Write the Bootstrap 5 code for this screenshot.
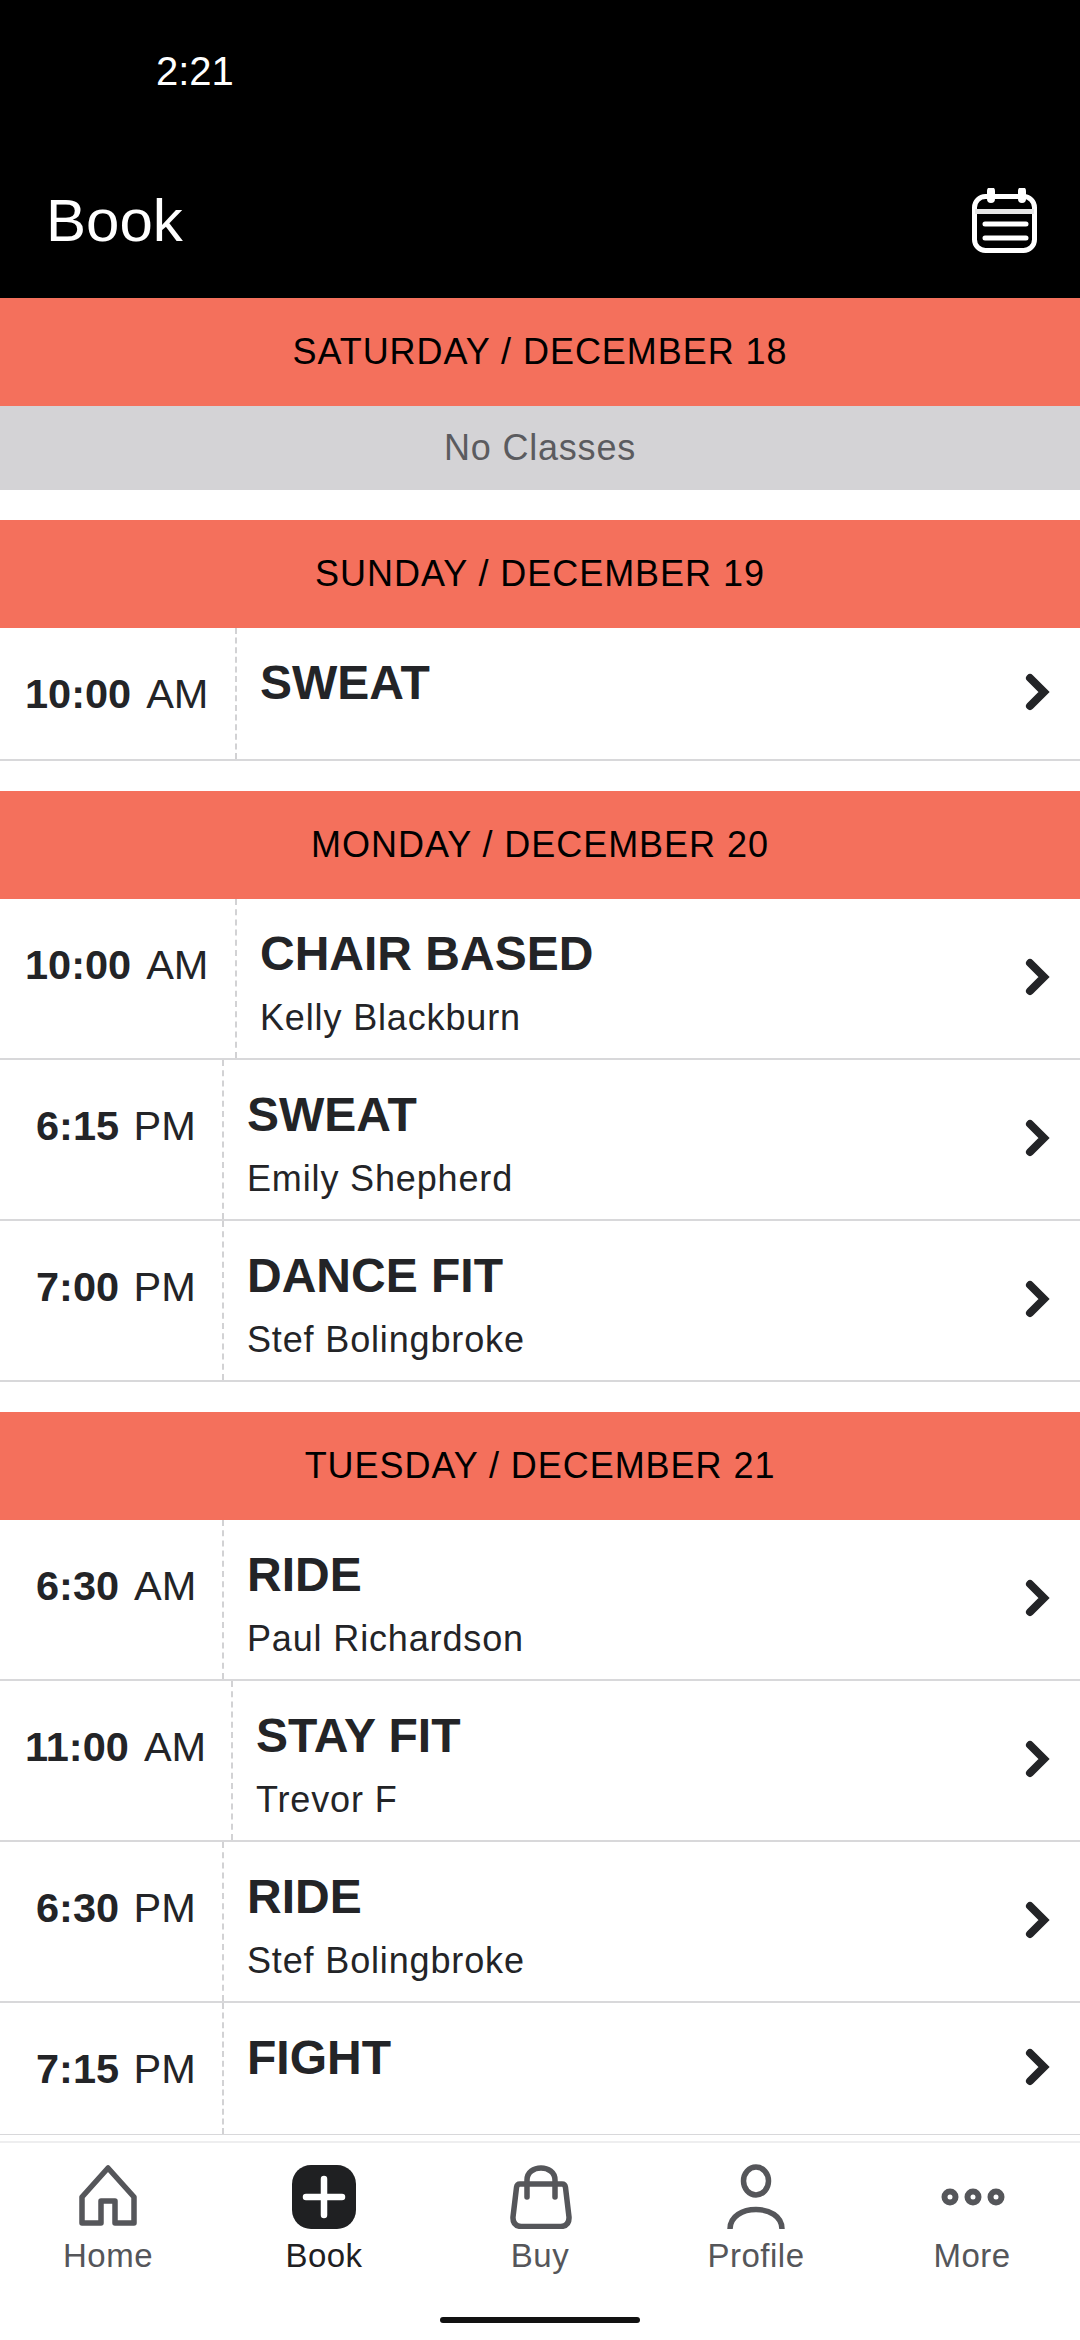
<!DOCTYPE html>
<html lang="en">
<head>
<meta charset="utf-8">
<title>Book</title>
<link href="https://cdn.jsdelivr.net/npm/bootstrap@5.3.0/dist/css/bootstrap.min.css" rel="stylesheet">
<style>
html,body{height:100%;}
body{font-family:"Liberation Sans",Arial,sans-serif;background:#fff;color:#232427;overflow:hidden;}
.app-shell{height:2340px;}
.top-head{background:#000;color:#fff;height:298px;}
.clock{font-size:40px;line-height:46px;padding:48px 0 0 156px;height:188px;}
.head-row{padding:0 42px 0 46px;}
.head-title{font-size:60px;line-height:66px;}
.day-band{background:#f4705c;color:#000;height:108px;font-size:36px;letter-spacing:.95px;}
.no-class{background:#d4d3d6;color:#5b5b5f;height:84px;font-size:36px;letter-spacing:.8px;}
.day-group{margin-bottom:30px;}
.class-row{border-bottom:2px solid #d8d8da;height:161px;}
.class-row.solo{height:133px;}
.time-cell{flex:none;font-size:41.500px;line-height:48px;padding-top:42px;white-space:nowrap;word-spacing:3px;}
.time-cell b{font-weight:700;}
.am-mark{margin-left:.5px;}
.tw-a{width:235px;padding-left:25px;}
.tw-b{width:222px;padding-left:36px;}
.tw-c{width:231px;padding-left:25px;}
.info-cell{border-left:2px dashed #d2d2d4;padding:27px 0 0 23px;}
.class-name{font-size:48px;line-height:56px;font-weight:700;}
.class-who{font-size:36px;line-height:42px;letter-spacing:.85px;margin-top:15px;}
.chev{width:26px;height:38px;margin:0 29px 4px 0;}
.tab-bar{border-top:2px solid #eeeeef;height:199px;margin-top:6px;}
.tab-item{width:216px;padding-top:20px;color:#55565a;font-size:33px;line-height:38px;letter-spacing:.5px;}
.tab-item.on{color:#1f2022;}
.tab-ico{width:70px;height:66px;display:block;margin-bottom:8px;}
.home-bar{position:absolute;left:440px;bottom:17px;width:200px;height:6px;border-radius:3px;background:#111;}
</style>
</head>
<body>
<div class="app-shell d-flex flex-column position-relative">
  <header class="top-head flex-shrink-0">
    <div class="clock">2:21</div>
    <div class="head-row d-flex justify-content-between align-items-center">
      <div class="head-title">Book</div>
      <svg width="66" height="66" viewBox="0 0 66 66" fill="none" stroke="#fff" stroke-linecap="round">
        <rect x="2.5" y="8.500" width="60" height="54" rx="11" stroke-width="5"/>
        <path d="M3 23.500H62" stroke-width="5" stroke="#e6e6e6" stroke-linecap="butt"/>
        <path d="M19 3V11M50 3V11" stroke-width="8"/>
        <path d="M13 36H54M13 50H54" stroke-width="5"/>
      </svg>
    </div>
  </header>
  <main class="flex-grow-1 overflow-hidden">
    <section class="day-group">
      <div class="day-band d-flex align-items-center justify-content-center">SATURDAY / DECEMBER 18</div>
      <div class="no-class d-flex align-items-center justify-content-center">No Classes</div>
    </section>
    <section class="day-group">
      <div class="day-band d-flex align-items-center justify-content-center">SUNDAY / DECEMBER 19</div>
      <div class="class-row solo d-flex">
        <div class="time-cell tw-a"><b>10:00</b> <span class="am-mark">AM</span></div>
        <div class="info-cell flex-grow-1"><div class="class-name">SWEAT</div></div>
        <svg class="chev align-self-center" viewBox="0 0 26 38"><path d="M5 5L19 19L5 33" fill="none" stroke="#232427" stroke-width="8" stroke-linecap="round"/></svg>
      </div>
    </section>
    <section class="day-group">
      <div class="day-band d-flex align-items-center justify-content-center">MONDAY / DECEMBER 20</div>
      <div class="class-row d-flex">
        <div class="time-cell tw-a"><b>10:00</b> <span class="am-mark">AM</span></div>
        <div class="info-cell flex-grow-1"><div class="class-name">CHAIR BASED</div><div class="class-who">Kelly Blackburn</div></div>
        <svg class="chev align-self-center" viewBox="0 0 26 38"><path d="M5 5L19 19L5 33" fill="none" stroke="#232427" stroke-width="8" stroke-linecap="round"/></svg>
      </div>
      <div class="class-row d-flex">
        <div class="time-cell tw-b"><b>6:15</b> PM</div>
        <div class="info-cell flex-grow-1"><div class="class-name">SWEAT</div><div class="class-who">Emily Shepherd</div></div>
        <svg class="chev align-self-center" viewBox="0 0 26 38"><path d="M5 5L19 19L5 33" fill="none" stroke="#232427" stroke-width="8" stroke-linecap="round"/></svg>
      </div>
      <div class="class-row d-flex">
        <div class="time-cell tw-b"><b>7:00</b> PM</div>
        <div class="info-cell flex-grow-1"><div class="class-name">DANCE FIT</div><div class="class-who">Stef Bolingbroke</div></div>
        <svg class="chev align-self-center" viewBox="0 0 26 38"><path d="M5 5L19 19L5 33" fill="none" stroke="#232427" stroke-width="8" stroke-linecap="round"/></svg>
      </div>
    </section>
    <section>
      <div class="day-band d-flex align-items-center justify-content-center">TUESDAY / DECEMBER 21</div>
      <div class="class-row d-flex">
        <div class="time-cell tw-b"><b>6:30</b> <span class="am-mark">AM</span></div>
        <div class="info-cell flex-grow-1"><div class="class-name">RIDE</div><div class="class-who">Paul Richardson</div></div>
        <svg class="chev align-self-center" viewBox="0 0 26 38"><path d="M5 5L19 19L5 33" fill="none" stroke="#232427" stroke-width="8" stroke-linecap="round"/></svg>
      </div>
      <div class="class-row d-flex">
        <div class="time-cell tw-c"><b>11:00</b> <span class="am-mark">AM</span></div>
        <div class="info-cell flex-grow-1"><div class="class-name">STAY FIT</div><div class="class-who">Trevor F</div></div>
        <svg class="chev align-self-center" viewBox="0 0 26 38"><path d="M5 5L19 19L5 33" fill="none" stroke="#232427" stroke-width="8" stroke-linecap="round"/></svg>
      </div>
      <div class="class-row d-flex">
        <div class="time-cell tw-b"><b>6:30</b> PM</div>
        <div class="info-cell flex-grow-1"><div class="class-name">RIDE</div><div class="class-who">Stef Bolingbroke</div></div>
        <svg class="chev align-self-center" viewBox="0 0 26 38"><path d="M5 5L19 19L5 33" fill="none" stroke="#232427" stroke-width="8" stroke-linecap="round"/></svg>
      </div>
      <div class="class-row solo d-flex">
        <div class="time-cell tw-b"><b>7:15</b> PM</div>
        <div class="info-cell flex-grow-1"><div class="class-name">FIGHT</div></div>
        <svg class="chev align-self-center" viewBox="0 0 26 38"><path d="M5 5L19 19L5 33" fill="none" stroke="#232427" stroke-width="8" stroke-linecap="round"/></svg>
      </div>
    </section>
  </main>
  <nav class="tab-bar d-flex flex-shrink-0">
    <div class="tab-item d-flex flex-column align-items-center">
      <svg class="tab-ico" viewBox="0 0 70 66" fill="none" stroke="#55565a" stroke-width="5.500" stroke-linejoin="round">
        <path d="M35 5L9 34V60H28V38H42V60H61V34Z"/>
      </svg>
      <span>Home</span>
    </div>
    <div class="tab-item on d-flex flex-column align-items-center">
      <svg class="tab-ico" viewBox="0 0 70 66">
        <rect x="3" y="2" width="64" height="64" rx="19" fill="#1f2022"/>
        <path d="M35 16V52M17 34H53" stroke="#fff" stroke-width="6.500" stroke-linecap="round"/>
      </svg>
      <span>Book</span>
    </div>
    <div class="tab-item d-flex flex-column align-items-center">
      <svg class="tab-ico" viewBox="0 0 70 66" fill="none" stroke="#55565a" stroke-width="5.500" stroke-linecap="round">
        <path d="M15 21H57Q60 21 60.500 24.500L64 54Q64.500 63 56 63.500H16Q7.500 63 8 54L11.500 24.500Q12 21 15 21Z"/>
        <path d="M22 34V17C22 1 50 1 50 17V34"/>
      </svg>
      <span>Buy</span>
    </div>
    <div class="tab-item d-flex flex-column align-items-center">
      <svg class="tab-ico" viewBox="0 0 70 66" fill="none" stroke="#55565a" stroke-width="5.500">
        <ellipse cx="35" cy="18" rx="12.500" ry="14"/>
        <path d="M9 66C9 40 61 40 61 66"/>
      </svg>
      <span>Profile</span>
    </div>
    <div class="tab-item d-flex flex-column align-items-center">
      <svg class="tab-ico" viewBox="0 0 70 66" fill="none" stroke="#55565a" stroke-width="6">
        <circle cx="13" cy="34" r="5.500"/>
        <circle cx="36" cy="34" r="5.500"/>
        <circle cx="59" cy="34" r="5.500"/>
      </svg>
      <span>More</span>
    </div>
  </nav>
  <div class="home-bar"></div>
</div>
<script src="https://cdn.jsdelivr.net/npm/bootstrap@5.3.0/dist/js/bootstrap.bundle.min.js"></script>
</body>
</html>
